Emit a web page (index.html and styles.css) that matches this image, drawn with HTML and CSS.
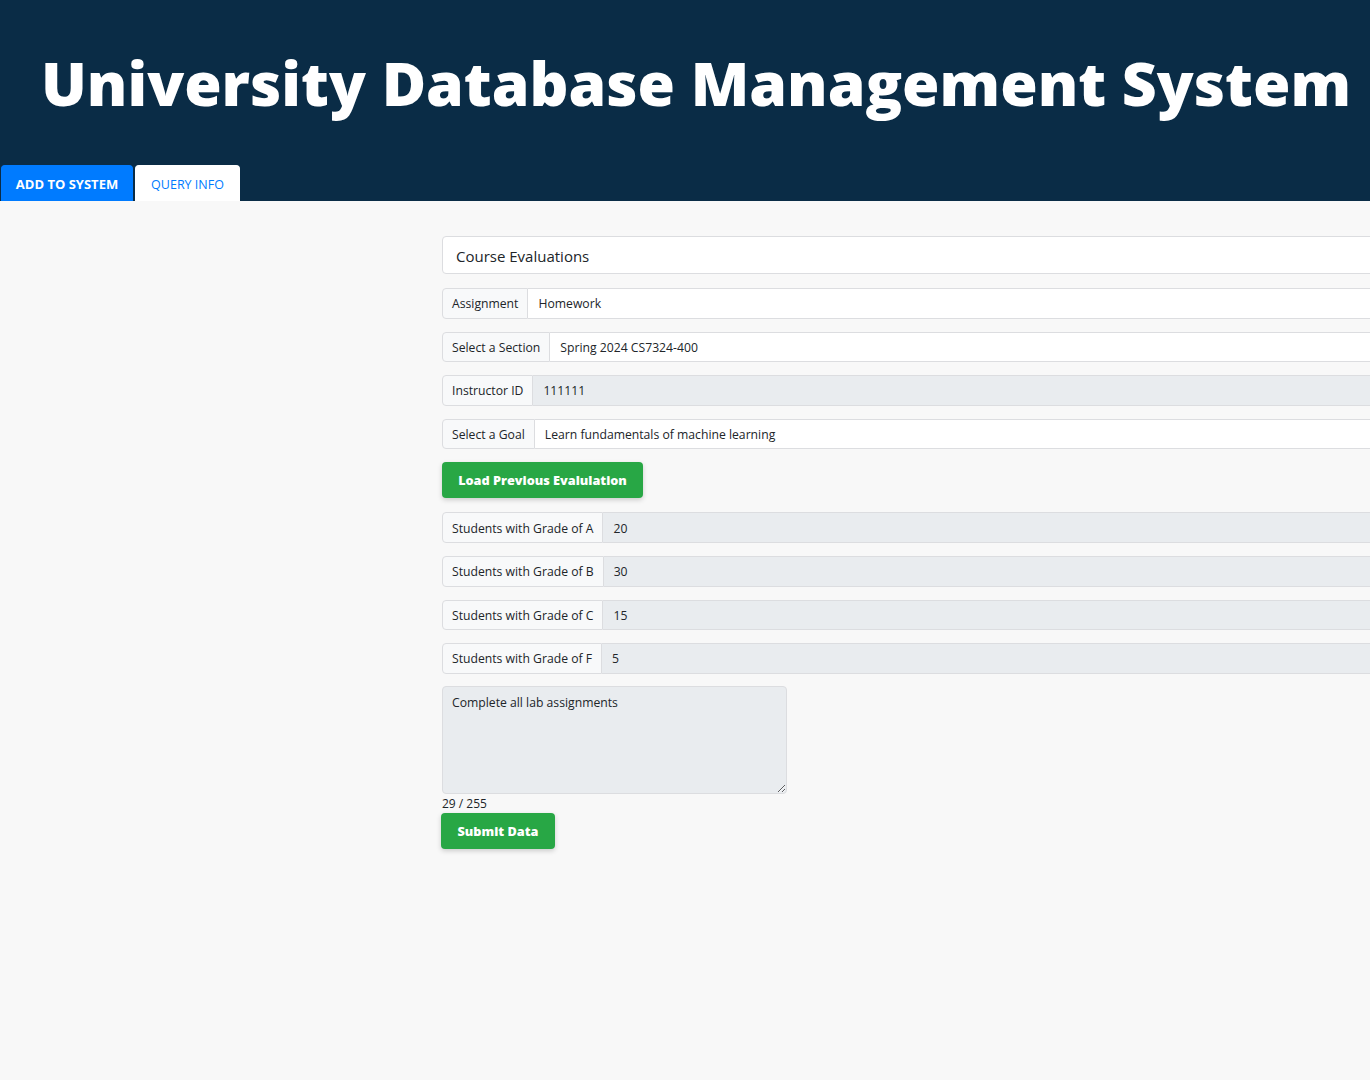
FILE: index.html
```html
<!DOCTYPE html>
<html lang="en">
<head>
<meta charset="utf-8">
<title>University Database Management System</title>
<link rel="stylesheet" href="styles.css">
</head>
<body>
<header class="header">
  <h1 class="title">University Database Management System</h1>
  <nav class="tabs">
    <button class="tab tab-active" type="button">ADD TO SYSTEM</button>
    <button class="tab" type="button">QUERY INFO</button>
  </nav>
</header>
<main class="main">
  <form class="form">
    <div class="select-lg">Course Evaluations</div>

    <div class="group">
      <span class="group-label">Assignment</span>
      <span class="group-field">Homework</span>
    </div>
    <div class="group">
      <span class="group-label">Select a Section</span>
      <span class="group-field">Spring 2024 CS7324-400</span>
    </div>
    <div class="group">
      <span class="group-label">Instructor ID</span>
      <span class="group-field readonly">111111</span>
    </div>
    <div class="group">
      <span class="group-label">Select a Goal</span>
      <span class="group-field">Learn fundamentals of machine learning</span>
    </div>

    <button class="btn btn-load" type="button">Load Previous Evalulation</button>

    <div class="group">
      <span class="group-label">Students with Grade of A</span>
      <span class="group-field readonly">20</span>
    </div>
    <div class="group">
      <span class="group-label">Students with Grade of B</span>
      <span class="group-field readonly">30</span>
    </div>
    <div class="group">
      <span class="group-label">Students with Grade of C</span>
      <span class="group-field readonly">15</span>
    </div>
    <div class="group group-last">
      <span class="group-label">Students with Grade of F</span>
      <span class="group-field readonly">5</span>
    </div>

    <textarea class="notes" readonly>Complete all lab assignments</textarea>
    <div class="count">29 / 255</div>
    <button class="btn btn-submit" type="button">Submit Data</button>
  </form>
</main>
</body>
</html>
```

FILE: styles.css
```css
html, body {
  margin: 0;
  padding: 0;
}
body {
  background: #f8f8f8;
  font-family: "Open Sans", "Noto Sans", sans-serif;
  color: #212529;
  overflow-x: hidden;
  min-height: 1080px;
}
.header {
  background: #0a2c46;
  height: 201px;
  display: flex;
  flex-direction: column;
  justify-content: flex-end;
}
.title {
  margin: 0 0 51px 0;
  color: #ffffff;
  font-family: "Open Sans", sans-serif;
  font-weight: 800;
  font-size: 60.6px;
  line-height: 1;
  text-align: center;
  padding-left: 22px;
  white-space: nowrap;
}
.tabs {
  display: flex;
  gap: 2px;
  padding-left: 1px;
  height: 36px;
}
.tab {
  border: 1px solid #ffffff;
  border-bottom: none;
  border-radius: 4px 4px 0 0;
  background: #ffffff;
  color: #007bff;
  font-family: "Open Sans", sans-serif;
  font-size: 12.5px;
  padding: 1px 0 0;
  width: 105px;
  height: 36px;
  cursor: pointer;
}
.tab-active {
  background: #007bff;
  border-color: #007bff;
  color: #ffffff;
  font-weight: 700;
  font-size: 13px;
  width: 132px;
}
.main {
  padding: 35px 0 0 442px;
}
.form {
  width: 1100px;
  display: flex;
  flex-direction: column;
  align-items: flex-start;
}
.select-lg {
  box-sizing: border-box;
  width: 100%;
  height: 38px;
  line-height: 38px;
  border: 1px solid #dcdde0;
  border-radius: 4px;
  background: #ffffff;
  padding: 0 13px;
  font-size: 15px;
  margin-bottom: 14px;
}
.group {
  box-sizing: border-box;
  display: flex;
  width: 100%;
  height: 30.6px;
  margin-bottom: 13px;
  font-size: 12.2px;
  line-height: 1;
}
.group-last {
  margin-bottom: 12.5px;
}
.group-label {
  display: flex;
  align-items: center;
  padding: 2px 9px 0;
  background: #f8f9fa;
  border: 1px solid #dcdde0;
  border-radius: 4px 0 0 4px;
  white-space: nowrap;
}
.group-field {
  flex: 1;
  display: flex;
  align-items: center;
  padding: 2px 10px 0;
  background: #ffffff;
  border: 1px solid #dcdde0;
  border-left: none;
  white-space: nowrap;
}
.group-field.readonly {
  background: #e9ecef;
}
.btn {
  border: none;
  border-radius: 4px;
  background: #28a745;
  color: #ffffff;
  font-family: "Open Sans", sans-serif;
  font-weight: 800;
  font-size: 12.7px;
  height: 36px;
  box-shadow: 0 2px 5px rgba(0, 0, 0, 0.18);
  cursor: pointer;
}
.btn-load {
  width: 201px;
  margin-bottom: 14px;
}
.btn-submit {
  width: 114px;
  margin-left: -1px;
}
.notes {
  box-sizing: border-box;
  width: 345px;
  height: 108px;
  background: #e9ecef;
  border: 1px solid #dcdde0;
  border-radius: 4px;
  padding: 7px 9px;
  font-family: "Open Sans", sans-serif;
  font-size: 12.2px;
  color: #212529;
  resize: both;
  margin: 0;
  display: block;
}
.count {
  font-size: 12px;
  line-height: 19px;
  height: 19px;
}
```
